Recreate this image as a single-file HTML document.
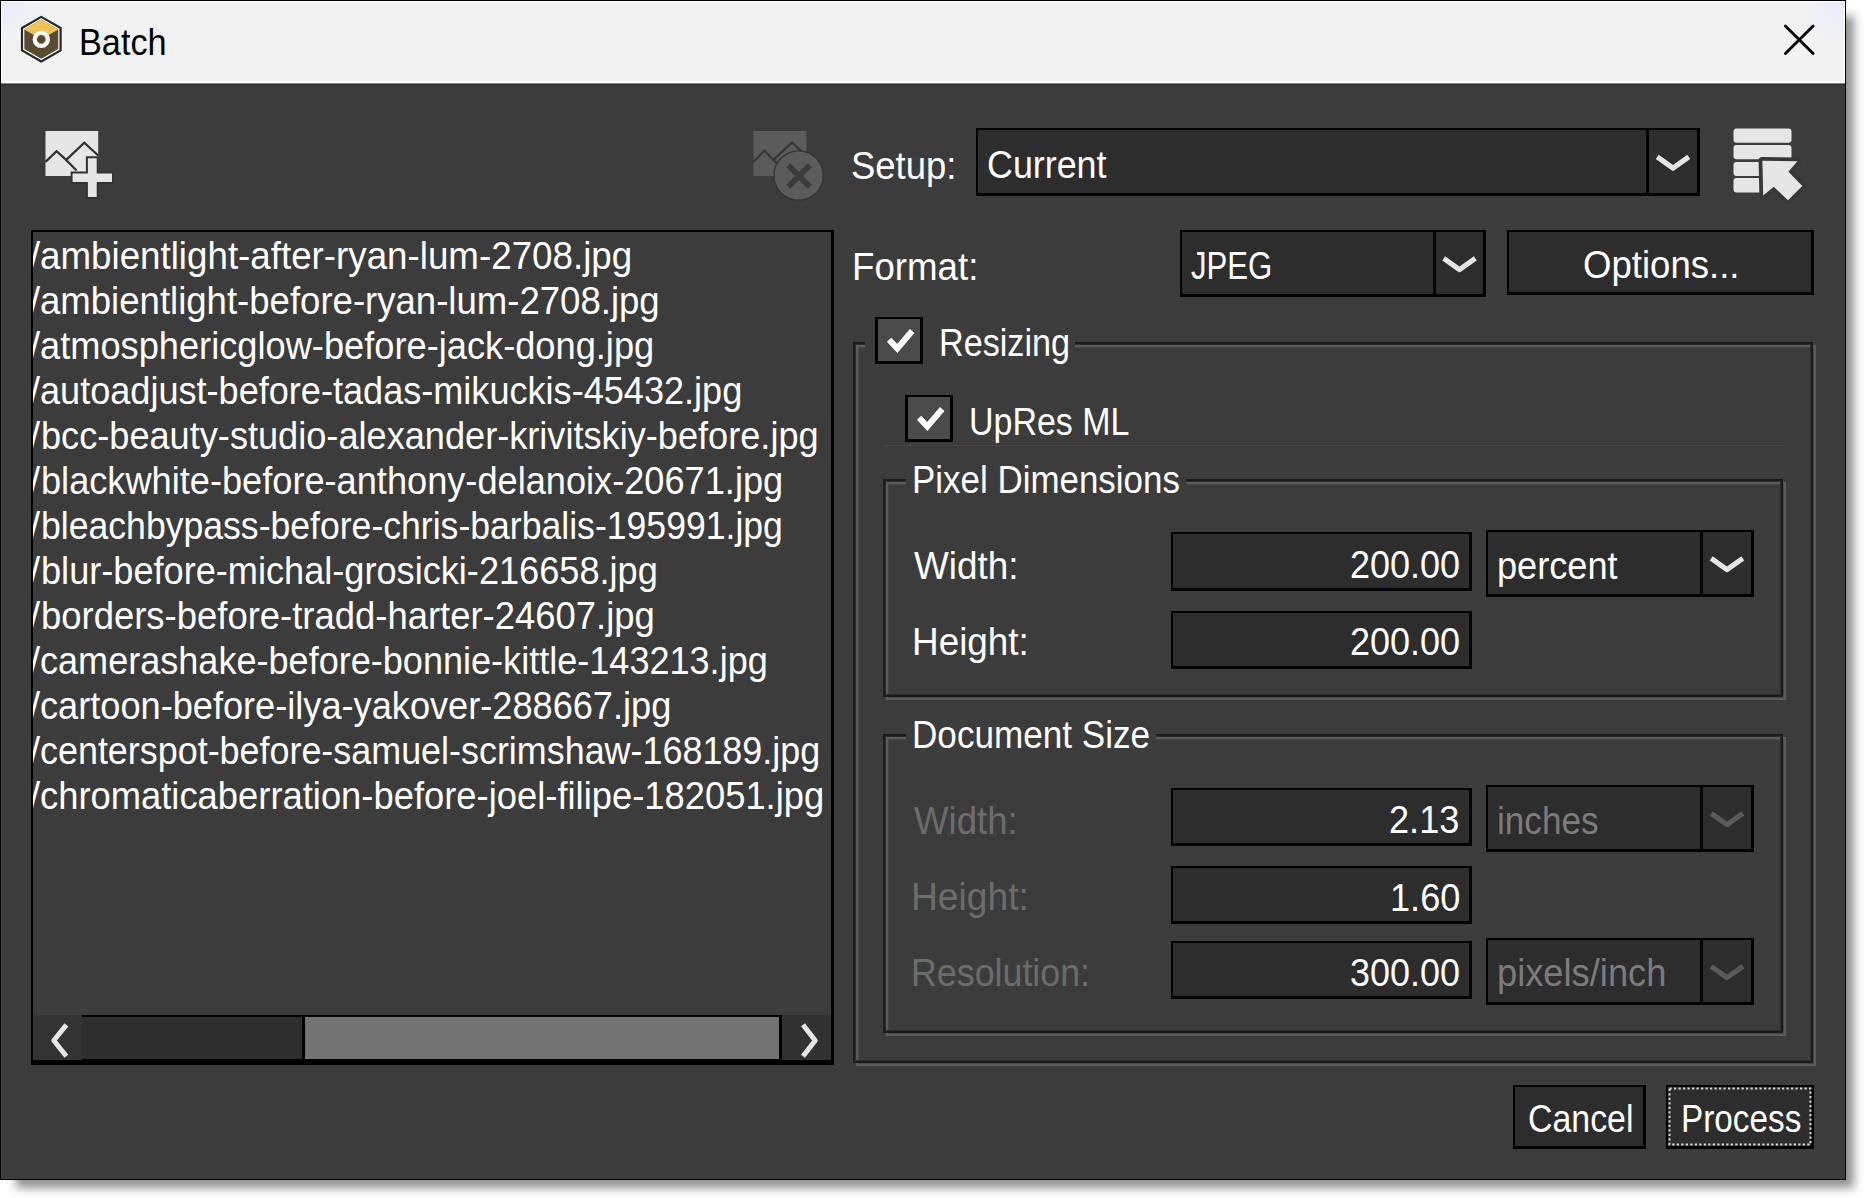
<!DOCTYPE html>
<html><head><meta charset="utf-8"><title>Batch</title>
<style>
html,body{margin:0;padding:0;background:#fff;}
body{width:1864px;height:1198px;position:relative;overflow:hidden;font-family:"Liberation Sans",sans-serif;}
.a{position:absolute;box-sizing:content-box;}
.t{position:absolute;white-space:pre;transform-origin:0 0;font-family:"Liberation Sans",sans-serif;}
</style></head><body>
<div class="a" style="left:0;top:0;width:1844px;height:1178px;border:1px solid #000;background:#3c3c3c;box-shadow:12px 12px 9px -4px rgba(0,0,0,0.43)"></div>
<div class="a" style="left:1px;top:1px;width:1844px;height:80px;background:#f2f2f2;"></div>
<div class="a" style="left:1px;top:1px;width:1844px;height:80px;background:transparent;background:radial-gradient(circle at 0 0, rgba(228,236,252,0.9) 0, rgba(242,242,242,0) 45px), radial-gradient(circle at 100% 0, rgba(228,236,252,0.9) 0, rgba(242,242,242,0) 45px)"></div>
<div class="a" style="left:1px;top:81px;width:1844px;height:2px;background:#ffffff;"></div>
<div class="a" style="left:1px;top:1px;width:1px;height:82px;background:#ffffff;"></div>
<div class="a" style="left:1px;top:1px;width:1844px;height:1px;background:#ffffff;"></div>
<div class="a" style="left:1844px;top:1px;width:1px;height:82px;background:#ffffff;"></div>
<div class="a" style="left:1px;top:83px;width:1844px;height:1px;background:#8a8a8a;"></div>
<div class="a" style="left:1px;top:84px;width:1844px;height:1px;background:#2c2c2c;"></div>
<div class="a" style="left:1px;top:85px;width:1px;height:1094px;background:#464646;"></div>
<div class="a" style="left:31px;top:230px;width:803px;height:835px;background:#000;"></div>
<div class="a" style="left:33px;top:232px;width:798px;height:828px;background:#3c3c3c;"></div>
<div class="a" style="left:33px;top:232px;width:798px;height:783px;overflow:hidden"><div class="t" style="left:7.10px;top:5.30px;font-size:38px;line-height:38px;color:#ffffff;transform:scaleX(0.9668)">ambientlight-after-ryan-lum-2708.jpg</div><div class="t" style="left:-3.41px;top:5.30px;font-size:38px;line-height:38px;color:#ffffff">/</div><div class="t" style="left:7.10px;top:50.26px;font-size:38px;line-height:38px;color:#ffffff;transform:scaleX(0.9619)">ambientlight-before-ryan-lum-2708.jpg</div><div class="t" style="left:-3.41px;top:50.26px;font-size:38px;line-height:38px;color:#ffffff">/</div><div class="t" style="left:7.12px;top:95.22px;font-size:38px;line-height:38px;color:#ffffff;transform:scaleX(0.9534)">atmosphericglow-before-jack-dong.jpg</div><div class="t" style="left:-3.41px;top:95.22px;font-size:38px;line-height:38px;color:#ffffff">/</div><div class="t" style="left:7.12px;top:140.18px;font-size:38px;line-height:38px;color:#ffffff;transform:scaleX(0.9499)">autoadjust-before-tadas-mikuckis-45432.jpg</div><div class="t" style="left:-3.41px;top:140.18px;font-size:38px;line-height:38px;color:#ffffff">/</div><div class="t" style="left:7.52px;top:185.14px;font-size:38px;line-height:38px;color:#ffffff;transform:scaleX(0.9514)">bcc-beauty-studio-alexander-krivitskiy-before.jpg</div><div class="t" style="left:-3.41px;top:185.14px;font-size:38px;line-height:38px;color:#ffffff">/</div><div class="t" style="left:7.51px;top:230.10px;font-size:38px;line-height:38px;color:#ffffff;transform:scaleX(0.9521)">blackwhite-before-anthony-delanoix-20671.jpg</div><div class="t" style="left:-3.41px;top:230.10px;font-size:38px;line-height:38px;color:#ffffff">/</div><div class="t" style="left:7.55px;top:275.06px;font-size:38px;line-height:38px;color:#ffffff;transform:scaleX(0.9366)">bleachbypass-before-chris-barbalis-195991.jpg</div><div class="t" style="left:-3.41px;top:275.06px;font-size:38px;line-height:38px;color:#ffffff">/</div><div class="t" style="left:7.52px;top:320.02px;font-size:38px;line-height:38px;color:#ffffff;transform:scaleX(0.9512)">blur-before-michal-grosicki-216658.jpg</div><div class="t" style="left:-3.41px;top:320.02px;font-size:38px;line-height:38px;color:#ffffff">/</div><div class="t" style="left:7.50px;top:364.98px;font-size:38px;line-height:38px;color:#ffffff;transform:scaleX(0.9591)">borders-before-tradd-harter-24607.jpg</div><div class="t" style="left:-3.41px;top:364.98px;font-size:38px;line-height:38px;color:#ffffff">/</div><div class="t" style="left:6.73px;top:409.94px;font-size:38px;line-height:38px;color:#ffffff;transform:scaleX(0.9491)">camerashake-before-bonnie-kittle-143213.jpg</div><div class="t" style="left:-3.41px;top:409.94px;font-size:38px;line-height:38px;color:#ffffff">/</div><div class="t" style="left:6.72px;top:454.90px;font-size:38px;line-height:38px;color:#ffffff;transform:scaleX(0.9518)">cartoon-before-ilya-yakover-288667.jpg</div><div class="t" style="left:-3.41px;top:454.90px;font-size:38px;line-height:38px;color:#ffffff">/</div><div class="t" style="left:6.73px;top:499.86px;font-size:38px;line-height:38px;color:#ffffff;transform:scaleX(0.9447)">centerspot-before-samuel-scrimshaw-168189.jpg</div><div class="t" style="left:-3.41px;top:499.86px;font-size:38px;line-height:38px;color:#ffffff">/</div><div class="t" style="left:6.71px;top:544.82px;font-size:38px;line-height:38px;color:#ffffff;transform:scaleX(0.9569)">chromaticaberration-before-joel-filipe-182051.jpg</div><div class="t" style="left:-3.41px;top:544.82px;font-size:38px;line-height:38px;color:#ffffff">/</div></div>
<div class="a" style="left:33px;top:1015px;width:49px;height:45px;background:#333333;"></div>
<div class="a" style="left:82px;top:1015px;width:700px;height:45px;background:#000;"></div>
<div class="a" style="left:82px;top:1017px;width:220px;height:42px;background:#2e2e2e;"></div>
<div class="a" style="left:305px;top:1017px;width:474px;height:42px;background:#737373;"></div>
<div class="a" style="left:782px;top:1015px;width:49px;height:45px;background:#313131;"></div>
<div class="a" style="left:976px;top:128px;width:724px;height:68px;background:#000;"></div><div class="a" style="left:978px;top:130px;width:719px;height:63px;background:#2d2d2d;"></div><div class="a" style="left:1646px;top:128px;width:3px;height:68px;background:#000;"></div>
<div class="a" style="left:1180px;top:230px;width:306px;height:67px;background:#000;"></div><div class="a" style="left:1182px;top:232px;width:301px;height:62px;background:#2d2d2d;"></div><div class="a" style="left:1433px;top:230px;width:3px;height:67px;background:#000;"></div>
<div class="a" style="left:1507px;top:230px;width:307px;height:65px;background:#000;"></div><div class="a" style="left:1509px;top:232px;width:302px;height:60px;background:#2d2d2d;"></div>
<div class="a" style="left:856px;top:345px;width:956px;height:717px;border:2px solid #5b5b5b;box-shadow:inset 0 0 0 1px #484848"></div><div class="a" style="left:853px;top:342px;width:956px;height:717px;border:2px solid #1b1b1b;box-shadow:inset 0 0 0 1px #2e2e2e"></div><div class="a" style="left:865px;top:341px;width:210px;height:8px;background:#3c3c3c;"></div>
<div class="a" style="left:886px;top:482px;width:896px;height:214px;border:2px solid #5b5b5b;box-shadow:inset 0 0 0 1px #484848"></div><div class="a" style="left:883px;top:479px;width:896px;height:214px;border:2px solid #1b1b1b;box-shadow:inset 0 0 0 1px #2e2e2e"></div><div class="a" style="left:906px;top:478px;width:280px;height:8px;background:#3c3c3c;"></div>
<div class="a" style="left:886px;top:737px;width:896px;height:295px;border:2px solid #5b5b5b;box-shadow:inset 0 0 0 1px #484848"></div><div class="a" style="left:883px;top:734px;width:896px;height:295px;border:2px solid #1b1b1b;box-shadow:inset 0 0 0 1px #2e2e2e"></div><div class="a" style="left:906px;top:733px;width:250px;height:8px;background:#3c3c3c;"></div>
<div class="a" style="left:884px;top:445px;width:899px;height:1px;background:#474747;"></div>
<div class="a" style="left:875px;top:317px;width:48px;height:47px;background:#000;"></div>
<div class="a" style="left:878px;top:319px;width:42px;height:42px;background:#4b4b4b;"></div>
<div class="a" style="left:905px;top:395px;width:48px;height:47px;background:#000;"></div>
<div class="a" style="left:908px;top:397px;width:42px;height:42px;background:#4b4b4b;"></div>
<div class="a" style="left:1171px;top:532px;width:301px;height:59px;background:#000;"></div><div class="a" style="left:1173px;top:534px;width:296px;height:54px;background:#2d2d2d;"></div>
<div class="a" style="left:1171px;top:611px;width:301px;height:58px;background:#000;"></div><div class="a" style="left:1173px;top:613px;width:296px;height:53px;background:#2d2d2d;"></div>
<div class="a" style="left:1486px;top:530px;width:268px;height:67px;background:#000;"></div><div class="a" style="left:1488px;top:532px;width:263px;height:62px;background:#2d2d2d;"></div><div class="a" style="left:1700px;top:530px;width:3px;height:67px;background:#000;"></div>
<div class="a" style="left:1171px;top:788px;width:301px;height:58px;background:#000;"></div><div class="a" style="left:1173px;top:790px;width:296px;height:53px;background:#2d2d2d;"></div>
<div class="a" style="left:1171px;top:866px;width:301px;height:58px;background:#000;"></div><div class="a" style="left:1173px;top:868px;width:296px;height:53px;background:#2d2d2d;"></div>
<div class="a" style="left:1171px;top:941px;width:301px;height:58px;background:#000;"></div><div class="a" style="left:1173px;top:943px;width:296px;height:53px;background:#2d2d2d;"></div>
<div class="a" style="left:1486px;top:785px;width:268px;height:67px;background:#000;"></div><div class="a" style="left:1488px;top:787px;width:263px;height:62px;background:#2d2d2d;"></div><div class="a" style="left:1700px;top:785px;width:3px;height:67px;background:#000;"></div>
<div class="a" style="left:1486px;top:938px;width:268px;height:67px;background:#000;"></div><div class="a" style="left:1488px;top:940px;width:263px;height:62px;background:#2d2d2d;"></div><div class="a" style="left:1700px;top:938px;width:3px;height:67px;background:#000;"></div>
<div class="a" style="left:1513px;top:1085px;width:133px;height:64px;background:#000;"></div><div class="a" style="left:1515px;top:1087px;width:128px;height:59px;background:#2d2d2d;"></div>
<div class="a" style="left:1666px;top:1085px;width:148px;height:64px;background:#000;"></div><div class="a" style="left:1668px;top:1087px;width:143px;height:59px;background:#2d2d2d;"></div>
<div class="t" style="left:78.96px;top:24.60px;font-size:36px;line-height:36px;color:#000;transform:scaleX(0.9522)">Batch</div>
<div class="t" style="left:851.14px;top:147.20px;font-size:38px;line-height:38px;color:#ffffff;transform:scaleX(0.9598)">Setup:</div>
<div class="t" style="left:986.53px;top:145.50px;font-size:38px;line-height:38px;color:#ffffff;transform:scaleX(0.9429)">Current</div>
<div class="t" style="left:851.57px;top:247.90px;font-size:38px;line-height:38px;color:#ffffff;transform:scaleX(0.9654)">Format:</div>
<div class="t" style="left:1190.92px;top:246.90px;font-size:38px;line-height:38px;color:#ffffff;transform:scaleX(0.8194)">JPEG</div>
<div class="t" style="left:1582.80px;top:246.40px;font-size:38px;line-height:38px;color:#ffffff;transform:scaleX(0.9622)">Options...</div>
<div class="t" style="left:939.16px;top:324.00px;font-size:38px;line-height:38px;color:#ffffff;transform:scaleX(0.8991)">Resizing</div>
<div class="t" style="left:969.25px;top:402.60px;font-size:38px;line-height:38px;color:#ffffff;transform:scaleX(0.8939)">UpRes ML</div>
<div class="t" style="left:912.30px;top:460.70px;font-size:38px;line-height:38px;color:#ffffff;transform:scaleX(0.9193)">Pixel Dimensions</div>
<div class="t" style="left:913.73px;top:546.80px;font-size:38px;line-height:38px;color:#ffffff;transform:scaleX(0.9706)">Width:</div>
<div class="t" style="left:1350.27px;top:545.60px;font-size:38px;line-height:38px;color:#ffffff;transform:scaleX(0.9470)">200.00</div>
<div class="t" style="left:1496.92px;top:546.80px;font-size:38px;line-height:38px;color:#ffffff;transform:scaleX(0.9517)">percent</div>
<div class="t" style="left:911.95px;top:623.30px;font-size:38px;line-height:38px;color:#ffffff;transform:scaleX(0.9705)">Height:</div>
<div class="t" style="left:1350.27px;top:623.30px;font-size:38px;line-height:38px;color:#ffffff;transform:scaleX(0.9470)">200.00</div>
<div class="t" style="left:912.29px;top:715.80px;font-size:38px;line-height:38px;color:#ffffff;transform:scaleX(0.9241)">Document Size</div>
<div class="t" style="left:914.03px;top:801.50px;font-size:38px;line-height:38px;color:#6c6c6c;transform:scaleX(0.9629)">Width:</div>
<div class="t" style="left:1389.06px;top:800.60px;font-size:38px;line-height:38px;color:#ffffff;transform:scaleX(0.9509)">2.13</div>
<div class="t" style="left:1496.72px;top:801.50px;font-size:38px;line-height:38px;color:#7c7c7c;transform:scaleX(0.9240)">inches</div>
<div class="t" style="left:911.13px;top:878.40px;font-size:38px;line-height:38px;color:#6c6c6c;transform:scaleX(0.9793)">Height:</div>
<div class="t" style="left:1389.91px;top:878.60px;font-size:38px;line-height:38px;color:#ffffff;transform:scaleX(0.9506)">1.60</div>
<div class="t" style="left:911.24px;top:954.40px;font-size:38px;line-height:38px;color:#6c6c6c;transform:scaleX(0.9419)">Resolution:</div>
<div class="t" style="left:1350.33px;top:953.50px;font-size:38px;line-height:38px;color:#ffffff;transform:scaleX(0.9456)">300.00</div>
<div class="t" style="left:1497.21px;top:954.30px;font-size:38px;line-height:38px;color:#7c7c7c;transform:scaleX(0.9546)">pixels/inch</div>
<div class="t" style="left:1527.53px;top:1100.00px;font-size:38px;line-height:38px;color:#ffffff;transform:scaleX(0.8918)">Cancel</div>
<div class="t" style="left:1680.63px;top:1100.00px;font-size:38px;line-height:38px;color:#ffffff;transform:scaleX(0.8771)">Process</div>
<svg class="a" style="left:0;top:0" width="1864" height="1198" viewBox="0 0 1864 1198"><rect x="1669.5" y="1088.5" width="141" height="56" fill="none" stroke="#d8d8d8" stroke-width="2" stroke-dasharray="2.25 2.25"/><polygon points="41.30,16.90 60.61,28.05 60.61,50.35 41.30,61.50 21.99,50.35 21.99,28.05" fill="#ffffff" stroke="#262626" stroke-width="2.2" stroke-linejoin="round"/><polygon points="41.30,19.60 58.27,29.40 58.27,49.00 41.30,58.80 24.33,49.00 24.33,29.40" fill="#5b4b2e"/><polygon points="41.3,19.6 58.27,29.40 41.3,39.2 24.33,29.40" fill="#ecc45a"/><circle cx="41.3" cy="39.4" r="6.5" fill="#5b4b2e" stroke="#ffffff" stroke-width="4.3"/><path d="M1785.4,25.9 L1813.1,53.6 M1813.1,25.9 L1785.4,53.6" stroke="#000" stroke-width="2.8" stroke-linecap="round"/><rect x="45.5" y="131" width="52.7" height="45" fill="#e6e6e6"/><polyline points="45.5,161.9 56.6,151.2 66.2,159.9 84.3,142.7 98.2,155.5" fill="none" stroke="#303030" stroke-width="2.2"/><line x1="66.2" y1="159.9" x2="76.5" y2="170.5" stroke="#303030" stroke-width="2.2"/><path d="M72.6,173.6 H87.9 V158.3 H96.7 V173.6 H112 V182.1 H96.7 V197 H87.9 V182.1 H72.6 Z" fill="#e6e6e6" stroke="#333" stroke-width="4" paint-order="stroke"/><rect x="753.5" y="131" width="52.9" height="45" fill="#5b5b5b"/><polyline points="753.5,161.9 764.5,150.5 773.4,159.9 792.2,142.4 806.4,156.5" fill="none" stroke="#383838" stroke-width="2.2"/><line x1="773.4" y1="159.9" x2="778" y2="164.5" stroke="#383838" stroke-width="2.2"/><circle cx="798.6" cy="175.5" r="24" fill="#5b5b5b" stroke="#353535" stroke-width="2.6" paint-order="stroke"/><path d="M788.3,165.3 L809.7,186.7 M809.7,165.3 L788.3,186.7" stroke="#3c3c3c" stroke-width="5.8"/><rect x="1733.5" y="128.5" width="58" height="14.3" rx="3" fill="#e6e6e6"/><rect x="1733.5" y="145" width="58" height="14.3" rx="3" fill="#e6e6e6"/><rect x="1733.5" y="162" width="32" height="14" rx="3" fill="#e6e6e6"/><rect x="1733.5" y="178.1" width="32" height="14.3" rx="3" fill="#e6e6e6"/><polygon points="1762.4,160.8 1797.4,161.2 1788.4,171.7 1802.3,186 1788,200.3 1773.7,186.7 1763.2,195.4" fill="#e6e6e6" stroke="#383838" stroke-width="7.6" stroke-linejoin="round" paint-order="stroke"/><polyline points="66.4,1024.9 53.8,1040.5 66.4,1056.2" fill="none" stroke="#e6e6e6" stroke-width="5" stroke-linejoin="round"/><polyline points="803,1024.8 815.2,1040.5 803,1056.2" fill="none" stroke="#e6e6e6" stroke-width="5" stroke-linejoin="round"/><polyline points="1657.2,156.9 1673.0,168.1 1688.8,156.9" fill="none" stroke="#e6e6e6" stroke-width="5" stroke-linejoin="round"/><polyline points="1443.7,258.4 1459.5,269.6 1475.3,258.4" fill="none" stroke="#e6e6e6" stroke-width="5" stroke-linejoin="round"/><polyline points="889.1,339.7 897.3,348.4 912.2,331" fill="none" stroke="#fff" stroke-width="6" stroke-linejoin="miter"/><polyline points="919.1,417.7 927.3,426.4 942.2,409" fill="none" stroke="#fff" stroke-width="6" stroke-linejoin="miter"/><polyline points="1711.2,558.4 1727.0,569.6 1742.8,558.4" fill="none" stroke="#e6e6e6" stroke-width="5" stroke-linejoin="round"/><polyline points="1711.2,813.4 1727.0,824.6 1742.8,813.4" fill="none" stroke="#5a5a5a" stroke-width="5" stroke-linejoin="round"/><polyline points="1711.2,966.4 1727.0,977.6 1742.8,966.4" fill="none" stroke="#5a5a5a" stroke-width="5" stroke-linejoin="round"/></svg>
</body></html>
